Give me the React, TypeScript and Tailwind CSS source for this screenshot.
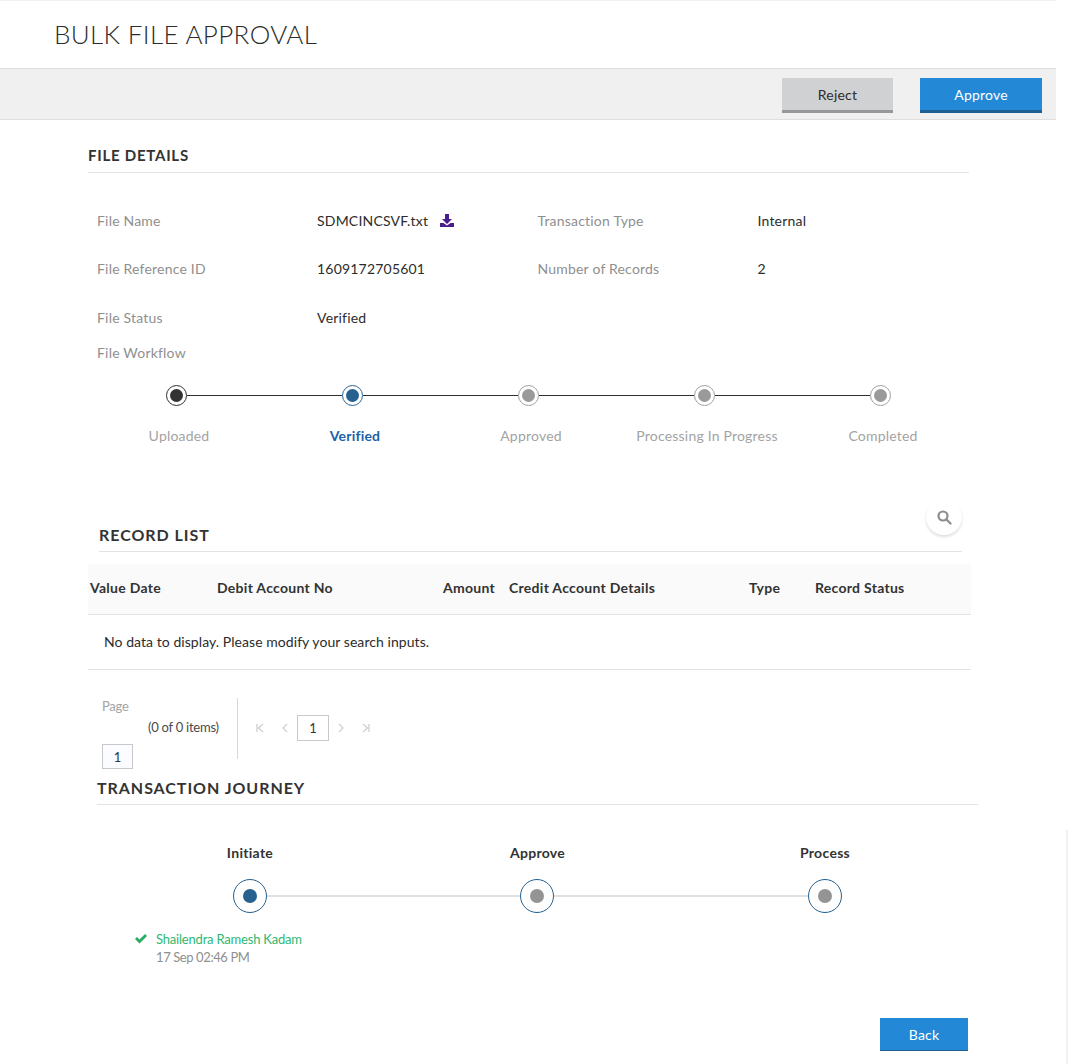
import React from "react";

const steps = ["Uploaded", "Verified", "Approved", "Processing In Progress", "Completed"];

function Dot({ kind }: { kind: "dark" | "blue" | "grey" }) {
  const ring = kind === "dark" ? "border-[#2f2f2f]" : kind === "blue" ? "border-[#2a6496]" : "border-[#a0a0a0]";
  const fill = kind === "dark" ? "bg-[#333333]" : kind === "blue" ? "bg-[#26618f]" : "bg-[#9a9a9a]";
  return (
    <span className={`flex h-[21px] w-[21px] shrink-0 items-center justify-center rounded-full border-[1.5px] bg-white ${ring}`}>
      <span className={`h-[13px] w-[13px] rounded-full ${fill}`} />
    </span>
  );
}

function JourneyDot({ active }: { active?: boolean }) {
  return (
    <span className="flex h-[34px] w-[34px] shrink-0 items-center justify-center rounded-full border border-[#26618f] bg-white">
      <span className={`h-[14px] w-[14px] rounded-full ${active ? "bg-[#26618f]" : "bg-[#949494]"}`} />
    </span>
  );
}

function Field({ label, children }: { label: string; children: React.ReactNode }) {
  return (
    <>
      <div className="text-[#8f8f8f]">{label}</div>
      <div className="flex items-start text-[#2c2c2c]">{children}</div>
    </>
  );
}

const Pager = ({ d }: { d: string }) => (
  <svg width="10" height="10" viewBox="0 0 10 10" fill="none" stroke="#d0d0d0" strokeWidth="1.3">
    <path d={d} />
  </svg>
);

export default function App() {
  return (
    <div className="relative h-[1064px] w-[1071px] overflow-hidden bg-white text-[14px] leading-[20px] tracking-[0.2px] font-['Lato','Noto_Sans',sans-serif]">
      <div className="h-px w-[1056px] bg-[#f0f0f5]" />
      <h1 className="mt-[17px] ml-[54px] h-[50px] text-[26px] leading-[32px] font-light tracking-[0.35px] text-[#2c2c2c]">BULK FILE APPROVAL</h1>
      <div className="flex h-[52px] w-[1056px] items-start justify-end gap-[27px] border-y border-[#dedede] bg-[#f0f0f0] pt-[9px] pr-[14px]">
        <button className="h-[35px] w-[111px] border-b-[3px] border-[#979797] bg-[#d0d1d3] pt-[2px] text-[#2c2c2c]">Reject</button>
        <button className="h-[35px] w-[122px] border-b-[3px] border-[#1f5f92] bg-[#2389d7] pt-[2px] text-white">Approve</button>
      </div>

      <section className="mt-[25px] ml-[88px] w-[881px]">
        <h2 className="border-b border-[#e2e2e2] pb-[7px] text-[15px] leading-[20px] font-bold tracking-[0.75px] text-[#333333]">FILE DETAILS</h2>
        <div className="mt-[38px] ml-[9px] grid grid-cols-[220px_220.5px_220px_1fr] grid-rows-[48px_49px_20px]">
          <Field label="File Name">
            SDMCINCSVF.txt
            <svg className="mt-[3px] ml-[12px]" width="14" height="13" viewBox="0 0 14 13" fill="#4b1d8f">
              <path d="M5 0h4v5h3L7 10 2 5h3z" />
              <path d="M0 9h3.500L7 11.500 10.500 9H14v4H0z" />
            </svg>
          </Field>
          <Field label="Transaction Type">Internal</Field>
          <Field label="File Reference ID">1609172705601</Field>
          <Field label="Number of Records">2</Field>
          <Field label="File Status">Verified</Field>
        </div>
        <div className="mt-[15px] ml-[9px] text-[#8f8f8f]">File Workflow</div>
      </section>

      <div className="mt-[22px] ml-[91px] w-[880px]">
        <div className="flex items-center pr-[80px] pl-[75px]">
          {steps.map((s, i) => (
            <React.Fragment key={s}>
              <Dot kind={i === 0 ? "dark" : i === 1 ? "blue" : "grey"} />
              {i < 4 && <span className="h-px flex-1 bg-[#2f2f2f]" />}
            </React.Fragment>
          ))}
        </div>
        <div className="mt-[20px] grid grid-cols-5 text-center text-[#a3a3a3]">
          {steps.map((s, i) => (
            <div key={s} className={i === 1 ? "font-bold text-[#1d5fa8]" : ""}>{s}</div>
          ))}
        </div>
      </div>

      <section className="relative mt-[79px] ml-[88px] w-[883px]">
        <button className="absolute top-[-26px] left-[838px] flex h-[36px] w-[36px] items-center justify-center rounded-full bg-white shadow-[0_2px_3px_rgba(0,0,0,0.13)]">
          <svg width="15" height="15" viewBox="0 0 15 15" fill="none" stroke="#8c8c8c" strokeWidth="2.2">
            <circle cx="6" cy="6" r="4.5" />
            <path d="M9.500 9.500l4 4" strokeLinecap="round" />
          </svg>
        </button>
        <h2 className="ml-[11px] w-[863px] border-b border-[#e2e2e2] pb-[6px] text-[16px] leading-[20px] font-bold tracking-[0.95px] text-[#333333]">RECORD LIST</h2>
        <div className="mt-[12px] flex h-[51px] items-center border-b border-[#e2e2e2] bg-[#fafafa] pb-[2px] font-bold tracking-[0.28px] text-[#333333]">
          <div className="ml-[2px] w-[127px]">Value Date</div>
          <div className="w-[226px]">Debit Account No</div>
          <div className="w-[66px]">Amount</div>
          <div className="w-[240px]">Credit Account Details</div>
          <div className="w-[66px]">Type</div>
          <div>Record Status</div>
        </div>
        <div className="flex h-[55px] items-center border-b border-[#e2e2e2] pl-[16px] tracking-[0.06px] text-[#2c2c2c]">No data to display. Please modify your search inputs.</div>
        <div className="mt-[28px] flex h-[61px] text-[13px] tracking-[-0.25px]">
          <div className="relative ml-[14px] w-[136px] border-r border-[#d8d8d8]">
            <div className="-mt-[2px] text-[#a3a3a3]">Page</div>
            <div className="mt-[1px] ml-[46px] text-[#4a4a4a]">(0 of 0 items)</div>
            <div className="absolute top-[46px] left-0 flex h-[25px] w-[31px] items-center justify-center border border-[#c8c8c8] bg-[#fafcff] text-[#333333]">1</div>
          </div>
          <div className="ml-[17px] flex h-[25px] translate-y-[17px] items-center text-[#333333]">
            <Pager d="M2 1v8M8 1L3.500 5 8 9" />
            <span className="w-[15px]" />
            <Pager d="M7 1L3 5l4 4" />
            <span className="w-[7px]" />
            <div className="flex h-[26px] w-[32px] items-center justify-center border border-[#c8c8c8]">1</div>
            <span className="w-[7px]" />
            <Pager d="M3 1l4 4-4 4" />
            <span className="w-[15px]" />
            <Pager d="M2 1l4.500 4L2 9M8 1v8" />
          </div>
        </div>
      </section>

      <section className="mt-[19px] ml-[97px] w-[881px]">
        <h2 className="border-b border-[#e2e2e2] pb-[6px] text-[16px] leading-[20px] font-bold tracking-[0.95px] text-[#333333]">TRANSACTION JOURNEY</h2>
        <div className="mt-[38px] ml-[103px] flex w-[675px] justify-between font-bold tracking-[0.3px] text-[#333333]">
          <div className="w-[100px] text-center">Initiate</div>
          <div className="w-[100px] text-center">Approve</div>
          <div className="w-[100px] text-center">Process</div>
        </div>
        <div className="mt-[16px] ml-[136px] flex w-[609px] items-center">
          <JourneyDot active />
          <span className="h-[2px] w-[253px] bg-[#e0e0e0]" />
          <JourneyDot />
          <span className="h-[2px] flex-1 bg-[#e0e0e0]" />
          <JourneyDot />
        </div>
        <div className="mt-[17px] ml-[38px] flex text-[13px] leading-[18px] tracking-[-0.2px]">
          <svg className="mt-[4px] mr-[9px]" width="12" height="10" viewBox="0 0 12 10" fill="#27ae60">
            <path d="M0 5l2-2 2.500 2.500L10 0l2 2-7.500 7.500z" />
          </svg>
          <div>
            <div className="text-[#2eb872]">Shailendra Ramesh Kadam</div>
            <div className="tracking-[-0.4px] text-[#8f8f8f]">17 Sep 02:46 PM</div>
          </div>
        </div>
      </section>

      <button className="absolute top-[1018px] left-[880px] h-[33px] w-[88px] border-b border-[#1f5f92] bg-[#2389d7] pt-[2px] text-white">Back</button>
      <div className="absolute top-[830px] left-[1066px] h-[234px] w-[2px] bg-[#f0f0f5]" />
    </div>
  );
}
